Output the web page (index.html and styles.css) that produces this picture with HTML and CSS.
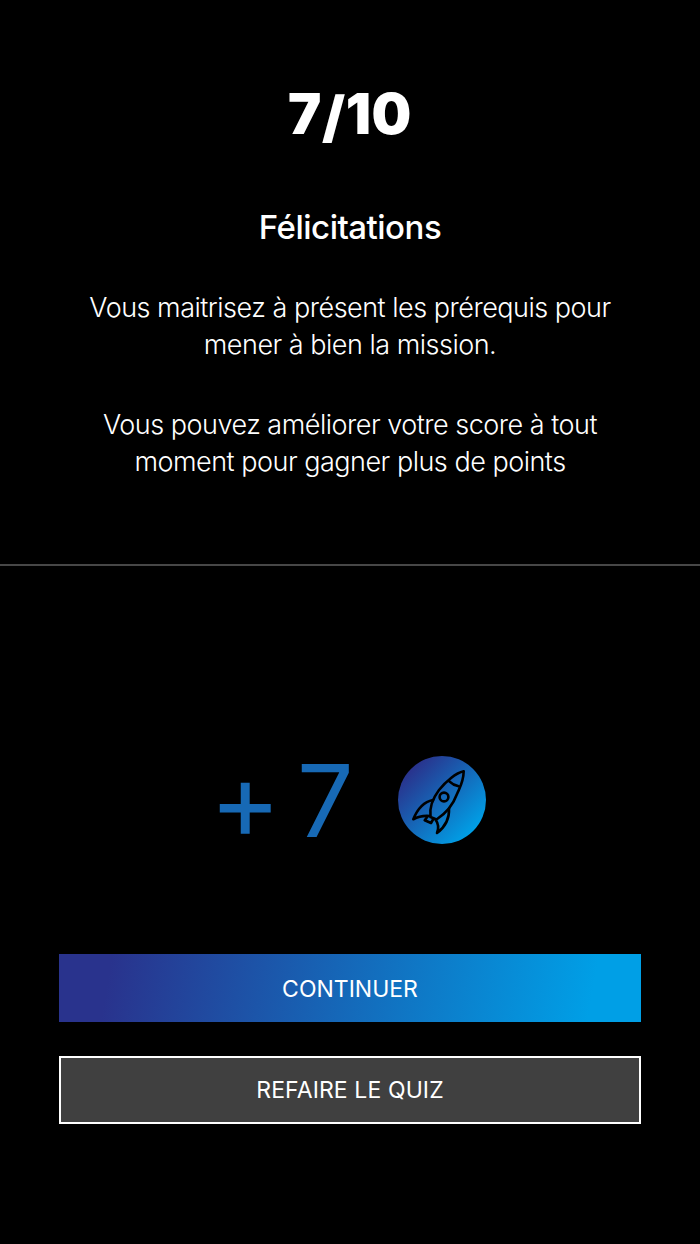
FILE: index.html
```html
<!DOCTYPE html>
<html lang="fr">
<head>
  <meta charset="UTF-8" />
  <meta name="viewport" content="width=device-width, initial-scale=1.0"/>
  <title>Résultat du quiz</title>
  <link rel="stylesheet" href="styles.css">
</head>
<body>

  <section class="result">
    <h1>7<span class="slash">/</span>10</h1>
    <h2>Félicitations</h2>
    <p>Vous maitrisez à présent les prérequis pour<br/>mener à bien la mission.</p>
    <p>Vous pouvez améliorer votre score à tout<br/>moment pour gagner plus de points</p>
  </section>

  <section class="reward">
    <div class="points">
      <span class="plus">+</span>
      <span class="gain">7</span>
      <svg class="rocket" viewBox="0 0 88 88">
        <defs>
          <linearGradient id="badge" x1="0" y1="0" x2="1" y2="1">
            <stop offset="0.15" stop-color="#29338d"/>
            <stop offset="0.85" stop-color="#009fe6"/>
          </linearGradient>
        </defs>
        <circle cx="44" cy="44" r="44" fill="url(#badge)"/>
        <g fill="none" stroke="#000" stroke-width="2.6" stroke-linejoin="round" stroke-linecap="round">
          <path d="M65.7 15.3C58 17 48 25 41 34C35 42 31 50 32.5 61L38.5 63.5C47 58 55 49 59 38C62 31 65.5 26 65.7 15.3Z"/>
          <path d="M51.3 25.3C54 28 57 29.5 60.7 30.3"/>
          <circle cx="46" cy="41" r="4.4"/>
          <path d="M35 44C25 46 19 54 15.3 63.3C21 60 26 59.5 32 60"/>
          <path d="M51 52.5C51.5 62 47 71 39 77C41.5 71 40 67 37.5 63.5"/>
          <path d="M29.2 61L26.7 64.3L33 67L35.3 63"/>
        </g>
      </svg>
    </div>
    <button class="continue">CONTINUER</button>
    <button class="retry">REFAIRE LE QUIZ</button>
  </section>

</body>
</html>
```

FILE: styles.css
```css
* { margin: 0; padding: 0; box-sizing: border-box; font-family: Inter, sans-serif; }
body {
  background: #000;
  color: #fff;
  text-align: center;
}
.result {
  height: 566px;
  padding-top: 79px;
  border-bottom: 2px solid #474747;
}
h1 {
  font-size: 56px;
  line-height: 70px;
  font-weight: 900;
  letter-spacing: 0.6px;
}
.slash {
  position: relative;
  top: 3px;
}
h2 {
  margin: 58px 0 42px;
  font-size: 33px;
  line-height: 40px;
  font-weight: 500;
  letter-spacing: -0.5px;
}
p {
  margin-bottom: 42px;
  font-size: 27px;
  line-height: 37.4px;
  font-weight: 300;
  letter-spacing: -0.5px;
}
.reward {
  padding: 172px 59px 0;
}
.points {
  display: flex;
  justify-content: center;
  align-items: center;
  height: 124px;
  margin-bottom: 92px;
  padding-right: 5px;
  color: #1769b5;
  font-size: 100px;
  line-height: 124px;
}
.plus {
  margin-right: 16px;
  font-size: 108px;
}
.gain {
  padding-top: 2px;
  margin-right: 44px;
}
.rocket {
  width: 88px;
  height: 88px;
}
button {
  display: block;
  width: 100%;
  height: 68px;
  color: #fff;
  font-size: 23px;
  cursor: pointer;
}
.continue {
  margin-bottom: 34px;
  padding-top: 1px;
  border: none;
  background: linear-gradient(100deg, #29338d 9%, #009fe6 91%);
}
.retry {
  border: 2px solid #fff;
  background: #404040;
  letter-spacing: 0.1px;
}
```
